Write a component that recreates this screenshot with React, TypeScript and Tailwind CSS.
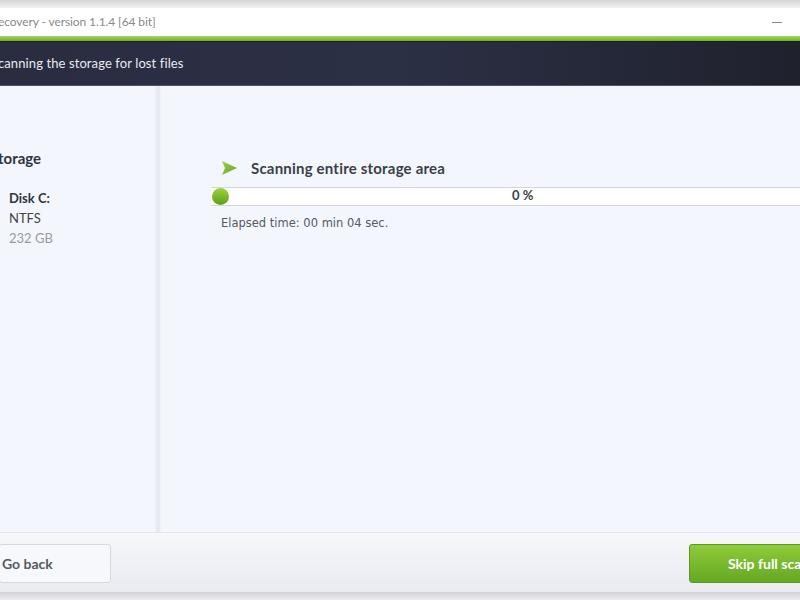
import React from "react";

export default function App() {
  return (
    <div
      className="w-[800px] h-[600px] overflow-hidden flex flex-col bg-[#f3f6fc]"
      style={{ fontFamily: 'Lato, "Open Sans", sans-serif' }}
    >
      {/* window top shadow */}
      <div className="h-[8px] bg-gradient-to-b from-[#d6d6d6] to-[#f2f2f2] shrink-0" />

      {/* title bar */}
      <div className="h-[28px] bg-white flex items-center justify-between shrink-0">
        <span className="text-[12px] text-[#8a8a8a] -ml-[2px] tracking-[-0.1px]">
          ecovery - version 1.1.4 [64 bit]
        </span>
        <span className="w-[10px] h-[1px] bg-[#888] mr-[18px]" />
      </div>

      {/* green stripe */}
      <div className="h-[5px] bg-gradient-to-b from-[#a6d85a] to-[#72ad28] shrink-0" />
      <div className="h-[1px] bg-[#1a2415] shrink-0" />

      {/* header band */}
      <div className="h-[44px] bg-gradient-to-r from-[#2a2d40] via-[#2c3045] to-[#1f212d] flex items-center shrink-0 border-b border-[#50546a]">
        <span className="text-[13px] text-[#e8eaf0] -ml-[2px] tracking-[0.1px]">
          canning the storage for lost files
        </span>
      </div>

      {/* body */}
      <div className="flex flex-1 min-h-0">
        {/* left panel */}
        <div className="w-[155px] shrink-0 pt-[61px]">
          <div className="text-[15px] font-bold text-[#30343c] -ml-[2px]">torage</div>
          <div className="pl-[9px] mt-[18px] flex flex-col text-[13px] leading-[20px]">
            <span className="font-bold text-[#30343c]">Disk C:</span>
            <span className="text-[#444]">NTFS</span>
            <span className="text-[#9a9a9a]">232 GB</span>
          </div>
        </div>

        {/* separator */}
        <div className="w-[6px] shrink-0 bg-[#e7eaf0] border-l border-r border-[#eef1f6]" />

        {/* right panel */}
        <div className="flex-1 pt-[71px] pl-[50px]">
          <div className="flex items-center gap-[14px] pl-[10px]">
            <svg width="16" height="14" viewBox="0 0 16 14">
              <defs>
                <linearGradient id="ar" x1="0" y1="0" x2="1" y2="1">
                  <stop offset="0" stopColor="#9ccf4a" />
                  <stop offset="1" stopColor="#6aa52a" />
                </linearGradient>
              </defs>
              <path d="M1 0 L16 7 L1 14 L4 7 Z" fill="url(#ar)" />
            </svg>
            <span className="text-[15px] font-bold text-[#3a3f48] tracking-[0.2px]">
              Scanning entire storage area
            </span>
          </div>

          <div className="relative mt-[7px] h-[19px] bg-white border-t border-b border-[#d2d5da] flex items-center">
            <div className="absolute left-[1px] top-[0px] w-[17px] h-[17px] rounded-full bg-gradient-to-b from-[#9cd43c] to-[#5e9e1a]" />
            <span className="ml-[301px] text-[13px] font-bold text-[#3a3f48]">0 %</span>
          </div>

          <div
            className="mt-[9px] pl-[10px] text-[11.5px] text-[#555a62]"
            style={{ fontFamily: '"DejaVu Sans", sans-serif' }}
          >
            Elapsed time: 00 min 04 sec.
          </div>
        </div>
      </div>

      {/* footer */}
      <div className="h-[60px] shrink-0 border-t border-[#e2e5ea] bg-gradient-to-b from-[#f6f7fb] to-[#e9ebf1] flex items-center justify-between">
        <button className="h-[39px] w-[112px] -ml-[1px] mt-[1px] border border-[#d6d8dd] rounded-[3px] bg-[#f7f8fb] text-left pl-[2px] text-[14px] font-bold text-[#555a62]">
          Go back
        </button>
        <button className="h-[39px] w-[130px] -mr-[19px] mt-[1px] rounded-[3px] border border-[#5c9a1e] bg-gradient-to-b from-[#8fcb3a] to-[#64a822] text-left pl-[38px] text-[14px] font-bold text-white whitespace-nowrap overflow-hidden">
          Skip full scan
        </button>
      </div>

      {/* bottom shadow */}
      <div className="h-[8px] shrink-0 bg-gradient-to-b from-[#d0d2d6] to-[#ececec]" />
    </div>
  );
}
